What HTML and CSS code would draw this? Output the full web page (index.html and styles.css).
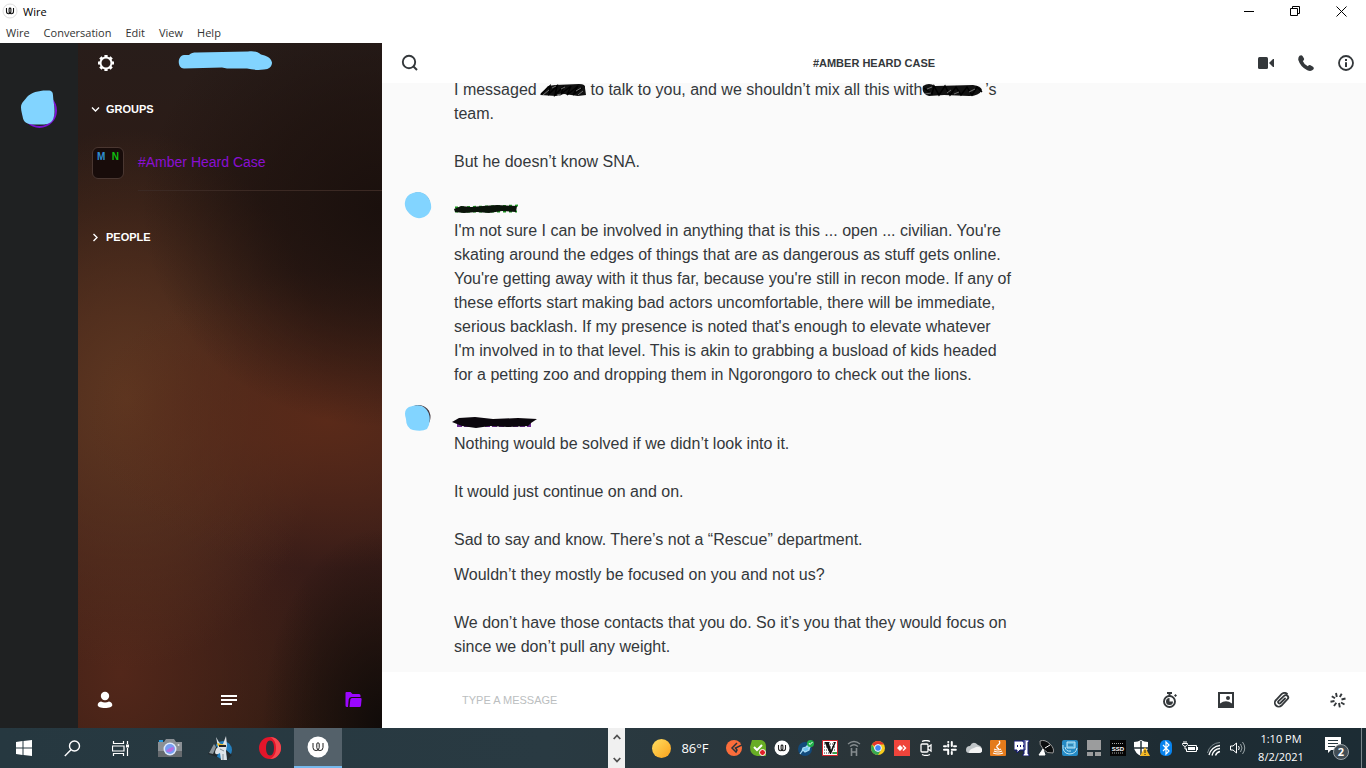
FILE: index.html
```html
<!DOCTYPE html>
<html lang="en">
<head>
<meta charset="utf-8">
<title>Wire</title>
<link rel="stylesheet" href="styles.css">
</head>
<body>
<header class="titlebar">
  <svg class="app-icon" width="16" height="16" viewBox="0 0 16 16"><circle cx="8" cy="8" r="7" fill="#fff" stroke="#ddd"/><path d="M4.500 5v3.500a2.200 2.200 0 0 0 4.400 0V6a.9.9 0 0 0-1.800 0v2.500a2.200 2.200 0 0 0 4.400 0V5" fill="none" stroke="#111" stroke-width="1.100"/></svg>
  <span class="app-name">Wire</span>
  <div class="window-controls">
    <button aria-label="Minimize"><svg width="11" height="11" viewBox="0 0 11 11"><path d="M0 5.500h10" stroke="#000"/></svg></button>
    <button aria-label="Restore"><svg width="11" height="11" viewBox="0 0 11 11" fill="none" stroke="#000"><path d="M.5 2.500h7v7h-7zM2.500 2.500v-2h7v7h-2"/></svg></button>
    <button aria-label="Close"><svg width="11" height="11" viewBox="0 0 11 11"><path d="M.5.5l10 10M10.500.5l-10 10" stroke="#000"/></svg></button>
  </div>
</header>
<nav class="menubar" aria-label="Application menu">
  <button>Wire</button><button>Conversation</button><button>Edit</button><button>View</button><button>Help</button>
</nav>

<div class="app">
  <aside class="rail">
    <button class="account" aria-label="Account">
      <svg width="40" height="42" viewBox="0 0 40 42"><circle cx="20.500" cy="21.500" r="16.500" fill="#1f2122" stroke="#7a12d0" stroke-width="2"/><path d="M8 8C12 3 22 1 29 1.500c4 0 5 2 5 5l.5 6c1.500 8 1.500 13-.5 18-3 5-8 5-12 5-8 0-16 1-18-6-.5-4-2-7-2-11 0-5 3-6 6-10.500z" fill="#82d4ff"/></svg>
    </button>
  </aside>

  <aside class="sidebar">
    <div class="side-head">
      <button aria-label="Settings"><svg width="18" height="18" viewBox="0 0 18 18"><circle cx="9" cy="9" r="5.500" fill="none" stroke="#fff" stroke-width="2"/><path d="M9 1v2.500M9 14.500V17M1 9h2.500M14.500 9H17M3.350 3.350l1.700 1.700M12.950 12.950l1.700 1.700M14.650 3.350l-1.700 1.700M5.050 12.950l-1.700 1.700" stroke="#fff" stroke-width="3.200"/></svg></button>
      <svg class="user-mask" width="96" height="20" viewBox="0 0 96 20"><path d="M7 4h5c2-2 4-2.500 8-2.500l51-1c5-1 9 0 13 3 5 1 10 3 11 8 0 4-3 7-8 7-7 1-12 0-17-1H50l-5-1-38 1C0 17 0 5 7 4z" fill="#82d4ff"/></svg>
    </div>
    <button class="folder"><svg width="9" height="9" viewBox="0 0 9 9"><path d="M1 2.500l3.500 3.500L8 2.500" fill="none" stroke="#fff" stroke-width="1.400"/></svg>GROUPS</button>
    <a class="conversation" href="#">
      <span class="group-avatar"><b class="m">M</b><b class="n">N</b></span>
      <span class="conv-name">#Amber Heard Case</span>
    </a>
    <button class="folder people"><svg width="9" height="9" viewBox="0 0 9 9"><path d="M2.500 1L6 4.500 2.500 8" fill="none" stroke="#fff" stroke-width="1.400"/></svg>PEOPLE</button>
    <nav class="side-foot">
      <button aria-label="Contacts"><svg width="16" height="18" viewBox="0 0 16 18" fill="#fff"><circle cx="8" cy="5" r="4.200"/><path d="M4 10.500c2.500 1.300 5.500 1.300 8 0 2 .5 3.300 1.800 3.300 3.500 0 2-3 3-7.300 3s-7.300-1-7.300-3c0-1.700 1.300-3 3.300-3.500z"/></svg></button>
      <button aria-label="Conversations"><svg width="16" height="18" viewBox="0 0 16 18" stroke="#fff" stroke-width="2"><path d="M0 5h16M0 9h16M0 13h11"/></svg></button>
      <button aria-label="Folders"><svg width="17" height="18" viewBox="0 0 17 18"><path d="M.5 2q0-1 1-1h4l2 2H14q1.500 0 1.500 1.500V6h-9Q4 6 3.700 8.500L3 16H2q-1.500 0-1.500-1.500zM4.500 16l.8-7.500Q5.500 7 7 7h8.500q1.200 0 1.100 1.200l-.6 6.300Q15.800 16 14.500 16z" fill="#9b06ff"/></svg></button>
    </nav>
  </aside>

  <main class="chat">
    <header class="chat-head">
      <button class="find" aria-label="Search"><svg width="18" height="18" viewBox="0 0 18 18" fill="none" stroke="#34383b" stroke-width="1.900"><circle cx="8" cy="8" r="6.200"/><path d="M12.500 12.500L16 16"/></svg></button>
      <h1>#AMBER HEARD CASE</h1>
      <div class="call-actions">
        <button aria-label="Video call"><svg width="16" height="16" viewBox="0 0 16 16" fill="#34383b"><rect y="2" width="10" height="12" rx="1.500"/><path d="M11 8l4-4h1v8h-1z"/></svg></button>
        <button aria-label="Call"><svg width="16" height="16" viewBox="0 0 16 16"><path d="M1.500.8Q3.500-.5 4.700 1.200L6 3.500Q6.500 5 4.800 6 6 9.500 9.800 11.300 11.200 9.500 12.500 10.200l2.500 1.500q1.500 1.200.3 2.700-2.300 2.500-6 .8Q2.500 12 .3 5 0 2.200 1.500.8z" fill="#34383b"/></svg></button>
        <button aria-label="Info"><svg width="16" height="16" viewBox="0 0 16 16"><circle cx="8" cy="8" r="7" fill="none" stroke="#34383b" stroke-width="1.800"/><path d="M7 4h2v2H7zM7 7.200h2V12H7z" fill="#34383b"/></svg></button>
      </div>
    </header>

    <section class="messages">
      <article class="message">
        <div class="body">
          <p>I messaged <svg class="mask mask-a" viewBox="0 0 45 14"><path d="M-1 12L7 3 14 2 38 1q7 0 6 4l1 7-8 1-14-2-8 2z" fill="#111"/><path d="M0 11L9 3l-1 8 8-8-2 9 9-9-3 8 10-8-4 9 11-9-5 9 9-7" fill="none" stroke="#000" stroke-width="1.500"/><path d="M11 5l4-2m5 3l4-2m11 4l5-3M2 12l6-5m8 5l4-1m17 1l5-4" stroke="#999" stroke-width=".7"/></svg> to talk to you, and we shouldn’t mix all this with<svg class="mask mask-b" viewBox="0 0 63 14"><path d="M1 3q6-4 12 0l38-1q8 1 9 5-3 6-13 6l-25-1-15 1Q-1 11 1 3z" fill="#111"/><path d="M2 5l8 6 2-8 5 9 6-9 5 9 6-8 5 8 6-8 5 8 5-8 5 5" fill="none" stroke="#000" stroke-width="1.500"/><path d="M5 6l5-2m15 6l4-3m18 2l6-3M3 11l6-1m23 1l5-2" stroke="#999" stroke-width=".7"/></svg>’s team.<br><br>But he doesn’t know SNA.</p>
        </div>
      </article>
      <article class="message">
        <svg class="avatar" width="28" height="28" viewBox="0 0 28 28"><circle cx="14" cy="13.500" r="12" fill="#333"/><path d="M9 2q8-3 14 3 5 6 4 13-3 8-10 9-7 1-12-5Q0 17 1 11 2 4 9 2z" fill="#82d4ff"/></svg>
        <svg class="name-mask" width="66" height="10" viewBox="0 0 66 10"><path d="M1 3.500l64-2M1 7.500h62" stroke="#1c9a22" stroke-width="2" stroke-dasharray="3 3"/><path d="M0 5l7-3 10 1 12-1 14-1 20 1-1 6-14-1-13 2-12-1-13 1-9-1z" fill="#0a140a"/></svg>
        <div class="body">
          <p>I'm not sure I can be involved in anything that is this ... open ... civilian. You're skating around the edges of things that are as dangerous as stuff gets online. You're getting away with it thus far, because you're still in recon mode. If any of these efforts start making bad actors uncomfortable, there will be immediate, serious backlash. If my presence is noted that's enough to elevate whatever I'm involved in to that level. This is akin to grabbing a busload of kids headed for a petting zoo and dropping them in Ngorongoro to check out the lions.</p>
        </div>
      </article>
      <article class="message">
        <svg class="avatar" width="28" height="28" viewBox="0 0 28 28"><circle cx="14.500" cy="13" r="12" fill="#40333a"/><path d="M5 3q8-3 13-1 6 3 7.500 10 1 8-2.500 13-5 3-14 1-7-2-7-11Q-1 6 5 3z" fill="#82d4ff"/></svg>
        <svg class="name-mask wide" width="86" height="12" viewBox="0 0 86 12"><path d="M5 9h74" stroke="#6c2c91" stroke-width="4" stroke-dasharray="5 2"/><path d="M0 6l7-4 16-1 18 2 25-1 19 1-6 4-3 3-20 1-18-1-14 2-14-2z" fill="#0b070d"/></svg>
        <div class="body">
          <p>Nothing would be solved if we didn’t look into it.<br><br>It would just continue on and on.<br><br>Sad to say and know. There’s not a “Rescue” department.</p>
          <p>Wouldn’t they mostly be focused on you and not us?<br><br>We don’t have those contacts that you do. So it’s you that they would focus on since we don’t pull any weight.</p>
        </div>
      </article>
    </section>

    <form class="composer">
      <input type="text" aria-label="Message" placeholder="TYPE A MESSAGE">
      <button type="button" aria-label="Timed message"><svg width="16" height="16" viewBox="0 0 16 16"><circle cx="7.500" cy="9.500" r="5.500" fill="none" stroke="#34383b" stroke-width="1.900"/><path d="M5 0h5v2H5zM6.500 1h2v3h-2zM12 3.500l1.500-1.500 1.500 1.500L13.500 5zM7.500 6v3.500H11A3.500 3.500 0 1 1 7.500 6z" fill="#34383b"/></svg></button>
      <button type="button" aria-label="Picture"><svg width="16" height="16" viewBox="0 0 16 16"><path d="M0 0h16v16H0zM2 2v9.500Q8 7 14 11.500V2z" fill="#34383b" fill-rule="evenodd"/><circle cx="10" cy="6" r="2" fill="#34383b"/></svg></button>
      <button type="button" aria-label="Attach file"><svg width="16" height="16" viewBox="0 0 16 16"><path d="M11 6.500l-4.500 4.500a1.300 1.300 0 0 1-2-1.900L10 3.800a2.400 2.400 0 0 1 3.500 3.400L7.500 13.500A3.800 3.800 0 0 1 2 8l5.500-5.800a4.500 4.500 0 0 1 5.500-.5" fill="none" stroke="#34383b" stroke-width="1.800" stroke-linecap="round"/></svg></button>
      <button type="button" aria-label="Ping"><svg width="16" height="16" viewBox="0 0 16 16"><path d="M6 1l.8 4M11.700 1.700L9.800 5M15.500 6.500L11.500 7.500M14.500 12.500L11 10.500M9.800 15.300L9 11M4 14l2.300-3.200M.5 9.700l4-.7M1.800 4.200L5 6.300" stroke="#34383b" stroke-width="1.900"/></svg></button>
    </form>
  </main>
</div>

<footer class="taskbar">
  <div class="pinned">
    <button aria-label="Start"><svg width="16" height="16" viewBox="0 0 16 16" fill="#fff"><path d="M0 2l6.500-1v6.500H0zM7.500.9L16 0v7.500H7.500zM0 8.500h6.500V15L0 14zM7.500 8.500H16V16l-8.500-1z"/></svg></button>
    <button aria-label="Search"><svg width="17" height="17" viewBox="0 0 17 17" fill="none" stroke="#fff" stroke-width="1.400"><circle cx="10.500" cy="6" r="5"/><path d="M7 9.800L.8 16"/></svg></button>
    <button aria-label="Task view"><svg width="17" height="17" viewBox="0 0 17 17" fill="none" stroke="#fff" stroke-width="1.200"><path d="M1.500 1v2.500h10V1M1.500 16v-2.500h10V16M.5 6h11.500v5H.5zM15.500 1v3M15.500 8v8"/><path d="M15.500 4.500v3" stroke-width="3"/></svg></button>
    <button class="pin camera" aria-label="Camera"><svg width="24" height="20" viewBox="0 0 24 20"><path d="M1 2h4v3H1z" fill="#279be0"/><path d="M8 1h8l2 3h6v15H0V4h6z" fill="#8b9095"/><path d="M0 13h24v6H0z" fill="#666a6e"/><circle cx="12" cy="11" r="6.500" fill="#dce9fb"/><circle cx="12" cy="11" r="5" fill="#779df3"/><path d="M8 13a5 5 0 0 0 8-4q-4 0-8 4z" fill="#b86dde"/><circle cx="20.500" cy="7" r="1" fill="#ddd"/></svg></button>
    <button class="pin" aria-label="Mule"><svg width="25" height="25" viewBox="0 0 25 25"><circle cx="15" cy="14" r="9" fill="#247fbe"/><path d="M0 18L6 8l5 5-2 8zM17 13l7 6-5 5z" fill="#23292d"/><path d="M1 17l5-9 2 3-3 7z" fill="#8d969b"/><path d="M8 1l4 7h3l3-8 1 9-1 6 1 9h-6l-1-7q-5 3-5-1 0-3 3-5z" fill="#dfe3e8"/><path d="M9 7l9 2v2l-8-1z" fill="#ecb823"/><path d="M11 9h7v2h-7z" fill="#202326"/><path d="M15 18v6M12 13l4 2" stroke="#858d94"/></svg></button>
    <button class="pin" aria-label="Opera"><svg width="24" height="24" viewBox="0 0 24 24"><path d="M12 1a11 11 0 1 0 0 22 11 11 0 0 0 0-22z" fill="#e3152a"/><path d="M12 1a11 11 0 0 1 0 22c8-3 8-19 0-22z" fill="#f5484f"/><path d="M12 4.500c2.700 0 4 3.200 4 7.500s-1.300 7.500-4 7.500S8 16.300 8 12s1.300-7.500 4-7.500z" fill="#26363e"/></svg></button>
    <button class="running" aria-label="Wire"><svg width="22" height="22" viewBox="0 0 22 22"><circle cx="11" cy="11" r="10.500" fill="#fff"/><path d="M6 7v4.500a3.100 3.100 0 0 0 6.200 0V8a1.200 1.200 0 0 0-2.400 0v3.500a3.100 3.100 0 0 0 6.200 0V7" fill="none" stroke="#222" stroke-width="1"/></svg></button>
  </div>
  <div class="scroller">
    <button aria-label="Scroll up"><svg width="8" height="6" viewBox="0 0 8 6"><path d="M.7 5L4 1.500 7.300 5" fill="none" stroke="#505050" stroke-width="1.800"/></svg></button>
    <button aria-label="Scroll down"><svg width="8" height="6" viewBox="0 0 8 6"><path d="M.7 1L4 4.500 7.300 1" fill="none" stroke="#505050" stroke-width="1.800"/></svg></button>
  </div>
  <button class="weather"><span class="sun"></span>86°F</button>
  <div class="tray">
    <svg viewBox="0 0 16 16"><circle cx="8" cy="8" r="8" fill="#fb6d3b"/><path d="M11 3L6 8l4 4 1-2-1.500-2L16 5" fill="none" stroke="#28343a" stroke-width="1.500"/></svg>
    <svg viewBox="0 0 16 16"><path d="M2 0h9q5 1 5 7v9H7Q0 15 0 7z" fill="#68ad25"/><path d="M4 7l3 3 5-5" fill="none" stroke="#fff" stroke-width="2"/><circle cx="12.500" cy="12.500" r="3" fill="#e21f26" stroke="#fff"/></svg>
    <svg viewBox="0 0 16 16"><circle cx="8" cy="8" r="7.500" fill="#fff"/><path d="M4.500 5v3.500a2.200 2.200 0 0 0 4.400 0V6a.9.9 0 0 0-1.800 0v2.500a2.200 2.200 0 0 0 4.400 0V5" fill="none" stroke="#222" stroke-width="1.100"/></svg>
    <svg viewBox="0 0 16 16"><circle cx="7" cy="9" r="7" fill="#124a7b"/><path d="M2 14l3-4 2 2 4-2 1-4-4 1-3 1-1 3zM8 7l3-3M10 9l3-3" stroke="#a9dcf7" stroke-width="1.200" fill="#70c4ef"/><circle cx="12.500" cy="3.500" r="3.500" fill="#20b24b"/><path d="M11 3l1 1.500L14.500 2" stroke="#fff" fill="none"/></svg>
    <svg viewBox="0 0 16 16"><path d="M.5.500h15v15H.5z" fill="#fff" stroke="#d5232c"/><path d="M2 4h12M2 7h12M2 10h12M2 13h12" stroke="#333" stroke-width="1" stroke-dasharray="1 1"/><path d="M2 2h6l-1 1 2 7 3-7-1-1h3L9 14H8L3 3z" fill="#111"/><path d="M11 12h4v2h-4z" fill="#35a54c"/></svg>
    <svg viewBox="0 0 16 16" fill="none" stroke="#858c8f"><path d="M5.500 8v8M10.500 8v8M5.500 12h5" stroke-width="1.600"/><path d="M2 4q6-5 12 0M4 6.500q4-3.500 8 0" stroke-width="1.300"/></svg>
    <svg viewBox="0 0 16 16"><circle cx="8" cy="8" r="7" fill="#f8cc1d"/><path d="M8 8L2 4.500A7 7 0 0 1 14 4.500H8z" fill="#e5372c"/><path d="M2 4.500A7 7 0 0 0 8 15l3-5H5z" fill="#36a852"/><circle cx="8" cy="8" r="3.400" fill="#4285f4" stroke="#fff"/></svg>
    <svg viewBox="0 0 16 16"><path d="M0 0h16v16H0z" fill="#ef443b"/><path d="M3 8l3-3 3 3-3 3zM8.500 6l1-1 3 3-3 3-1-1 2-2z" fill="#fff"/></svg>
    <svg viewBox="0 0 16 16" fill="none" stroke="#fff" stroke-width="1.300"><rect x="3" y="4" width="7" height="8" rx="1"/><path d="M10 7l3-2v6l-3-2M4 1.500q4-2 8 0M4 14.500q4 2 8 0"/></svg>
    <svg viewBox="0 0 16 16" stroke="#fff" stroke-width="2" stroke-linecap="round"><path d="M6.200 4.500v2M6.200 2h.1M2 6.200h2M9.800 2v4M12 6.200h2M9.800 9.800h4M9.800 12v2M6.200 10v4M2 9.800h4"/></svg>
    <svg viewBox="0 0 16 16"><path d="M0 10q0-4 4-4 3-6 8-1 4 1 4 5 0 3-3 3H3q-3 0-3-3z" fill="#c0c5c8"/><path d="M3 13q0-4 5-5 5-3 8 1 1 4-3 4z" fill="#f3f3f3"/></svg>
    <svg viewBox="0 0 16 16"><rect width="16" height="16" rx="1" fill="#e47b1c"/><path d="M9 1q2 2-1 4t1 4M4 9q4 2 7 0M4 11q4 2 8 0M3 13q5 2 10 0" fill="none" stroke="#fff" stroke-width="1.200"/></svg>
    <svg viewBox="0 0 16 16"><path d="M0 1h11v9H6l-3 3v-3H0zM9 0h6v2h-1v12h1v2H9v-2h1V2H9z" fill="#fff" stroke="#151979"/><path d="M3 6h1M6 6h1M9 6h1" stroke="#151979" stroke-width="2"/></svg>
    <svg viewBox="0 0 16 16"><path d="M2 1Q7-1 12 4t3 9Q9 14 5 9T2 1z" fill="#0c0e0f" stroke="#999"/><path d="M5 9L1 15h6zM7 8l5-3" fill="#fff" stroke="#fff"/></svg>
    <svg viewBox="0 0 16 16"><rect width="16" height="16" rx="2" fill="#258ac4"/><path d="M5 2h8v6H5z" fill="#58b5df" stroke="#c2e5f6"/><path d="M1 5q-1 8 6 9 7 0 8-6M3 7q1 5 6 4" fill="none" stroke="#bce5f6"/><path d="M6 5h5" stroke="#155a91"/></svg>
    <svg viewBox="0 0 16 16"><path d="M1 0h14v10H1zM1 12h6v4H1zM9 12h6v4H9z" fill="#9b9c9d"/></svg>
    <svg viewBox="0 0 16 16"><path d="M0 0h16v16H0z" fill="#050505"/><path d="M2 3.500h12M2 13h12" stroke="#aaa" stroke-dasharray="1 1"/><text x="8" y="11" text-anchor="middle" class="ssd">SSD</text></svg>
    <svg viewBox="0 0 16 16"><path d="M7 0q3 2 7 2v6q-1 5-7 8Q1 13 0 8V2q4 0 7-2z" fill="#fff"/><path d="M7 1v14M0 8h14" stroke="#263339" stroke-width="1.500"/><path d="M11 7l5 9H6z" fill="#f5b924"/><path d="M11 10v3M11 14v1" stroke="#222"/></svg>
    <svg viewBox="0 0 16 16"><rect x="2" width="12" height="16" rx="5" fill="#0883ee"/><path d="M5 5l6 6-3 3V2l3 3-6 6" fill="none" stroke="#fff" stroke-width="1.200"/></svg>
    <svg viewBox="0 0 16 16" fill="none" stroke="#fff" stroke-width="1"><path d="M6 5.500h8.500v6h-10V9M15.500 7v3M.5 3.500h5v1q-2.500 4-5 0zM2 3V1M4 3V1M3 7v2h2"/><path d="M6 8.500h7" stroke-width="3"/></svg>
    <svg viewBox="0 0 16 16" fill="none" stroke="#fff"><path d="M1.500 13A13 13 0 0 1 14 2.500" stroke="#7c888d"/><path d="M3 15A12 12 0 0 1 14 5.500M6 15.500A9 9 0 0 1 14 8.500M9.500 15.500a6 6 0 0 1 4.500-4" stroke-width="1.300"/></svg>
    <svg viewBox="0 0 16 16" fill="none" stroke="#fff"><path d="M.5 6v4H3l3.500 3V3L3 6zM8.500 6q1.500 2 0 4"/><path d="M10.500 4q3 4 0 8M12.500 2q4.500 6 0 12" stroke="#9ba5a8"/></svg>
  </div>
  <time class="clock"><span>1:10 PM</span><span>8/2/2021</span></time>
  <button class="notify" aria-label="Notifications"><svg width="26" height="24" viewBox="0 0 26 24"><path d="M1 1h16v13H7l-3 3v-3H1z" fill="#fff"/><path d="M4 4.500h10M4 7.500h10M4 10.500h7" stroke="#263940"/><circle cx="17" cy="16" r="7.500" fill="#414d54" stroke="#9ba4a8"/><text x="17" y="20" text-anchor="middle" class="badge">2</text></svg></button>
</footer>
</body>
</html>
```
FILE: styles.css
```css
* { box-sizing: border-box; }
body {
  margin: 0;
  height: 100vh;
  display: flex;
  flex-direction: column;
  overflow: hidden;
  background: #fff;
  color: #34383b;
  font-family: "Liberation Sans", Arial, sans-serif;
}
button {
  border: 0;
  padding: 0;
  background: none;
  color: inherit;
  font: inherit;
  display: flex;
  align-items: center;
  justify-content: center;
}
svg { flex: none; display: block; }

.titlebar, .menubar, .taskbar { font-family: "Open Sans", "Noto Sans", sans-serif; font-size: 11px; flex: none; }
.titlebar { height: 22px; display: flex; align-items: center; padding: 0 2px; color: #000; }
.app-name { margin-left: 5px; }
.window-controls { margin-left: auto; display: flex; }
.window-controls button { width: 46px; height: 22px; }
.menubar { height: 21px; display: flex; align-items: center; gap: 14px; padding: 0 6px; color: #333; }

.app { flex: 1; min-height: 0; display: flex; }
.rail { width: 78px; flex: none; background: #1f2122; display: flex; flex-direction: column; align-items: center; padding-top: 46px; }
.sidebar {
  width: 304px;
  flex: none;
  display: flex;
  flex-direction: column;
  color: #fff;
  background:
    radial-gradient(ellipse 120px 200px at 100% 100%, #100b09 0, #100b0980 50%, #100b0900 100%),
    radial-gradient(ellipse 240px 220px at 100% 24%, #1a100d 0, #1a100d90 50%, #1a100d00 100%),
    radial-gradient(ellipse 240px 150px at 82% 55%, #5a2a19 0, #5a2a1980 50%, #5a2a1900 100%),
    radial-gradient(ellipse 200px 270px at 16% 52%, #5e3721 0, #5e372180 50%, #5e372100 100%),
    radial-gradient(ellipse 200px 260px at 14% 92%, #52271a 0, #52271a80 50%, #52271a00 100%),
    linear-gradient(#281d1a 0, #2d1b15 24%, #3b2018 40%, #42221a 58%, #381c18 76%, #301b12 100%);
}
.side-head { height: 41px; display: flex; align-items: center; padding: 0 0 1px 19px; gap: 62px; }
.user-mask { margin-bottom: 4px; }
.folder { height: 50px; padding-left: 13px; gap: 6px; font-size: 11px; font-weight: 700; justify-content: flex-start; }
.conversation { display: flex; align-items: center; height: 57px; padding-left: 14px; gap: 14px; color: #8a0fd2; text-decoration: none; font-size: 14px; }
.group-avatar { width: 32px; height: 32px; border: 1px solid #4a3731; border-radius: 6px; background: #180c0a; display: flex; justify-content: space-between; padding: 4px; font-size: 10px; line-height: 10px; }
.group-avatar .m { color: #2f8fd0; }
.group-avatar .n { color: #10bf10; }
.conv-name { flex: 1; align-self: stretch; display: flex; align-items: center; border-bottom: 1px solid #3b2923; }
.people { margin-top: 21px; }
.side-foot { margin-top: auto; height: 56px; display: flex; align-items: center; justify-content: space-between; padding: 0 20px 0 19px; }

.chat { flex: 1; min-width: 0; display: flex; flex-direction: column; }
.chat-head { height: 40px; flex: none; display: grid; grid-template-columns: 1fr auto 1fr; align-items: center; padding: 0 12px; }
.find { justify-self: start; margin-left: 7px; }
.chat-head h1 { margin: 0; font-size: 11px; font-weight: 700; }
.call-actions { justify-self: end; display: flex; gap: 24px; }
.messages { flex: 1; min-height: 0; overflow: hidden; background: #fafafa; display: flex; flex-direction: column; justify-content: flex-end; gap: 21px; padding-bottom: 13px; }
.message { flex: none; display: grid; grid-template-columns: 72px minmax(0, 560px); font-size: 16px; line-height: 24px; }
.body { grid-column: 2; display: flex; flex-direction: column; gap: 11px; }
.body p { margin: 0; }
.avatar { justify-self: center; align-self: end; margin: -4px 0 0; }
.name-mask { align-self: center; margin-top: 4px; }
.name-mask.wide { margin-left: -2px; }
.mask { display: inline-block; height: 14px; vertical-align: -2px; overflow: visible; }
.mask-a { width: 45px; }
.mask-b { width: 63px; }
.composer { flex: none; height: 56px; display: flex; align-items: center; gap: 40px; padding: 0 20px 0 80px; }
.composer input { flex: 1; min-width: 0; border: 0; outline: 0; padding: 0; background: none; font: 11px "Liberation Sans", Arial, sans-serif; color: #34383b; }
.composer input::placeholder { color: #bbbec0; opacity: 1; }

.taskbar { height: 40px; display: flex; align-items: stretch; color: #fff; background: linear-gradient(90deg, #263840 0, #293a42 40%, #2a3438 65%, #1e2c33 85%, #1c2c34 100%); }
.pinned { display: flex; flex: 1; }
.pinned button { width: 48px; }
.pinned .pin { width: 49px; }
.pinned .camera { width: 52px; }
.pinned .running { background: #54616a; border-bottom: 2px solid #76b9ed; }
.scroller { width: 17px; background: #f0f0f0; display: flex; flex-direction: column; justify-content: space-between; align-items: center; padding: 6px 0 5px; }
.weather { width: 101px; padding-left: 10px; gap: 10px; font-size: 13px; }
.sun { width: 19px; height: 19px; border-radius: 50%; background: linear-gradient(135deg, #ffdf62, #fba11b); }
.tray { display: flex; align-items: center; gap: 8px; }
.tray svg { width: 16px; height: 16px; }
.ssd { font: 700 6px "Liberation Sans", sans-serif; fill: #fff; }
.clock { width: 70px; display: flex; flex-direction: column; justify-content: center; align-items: center; line-height: 18px; }
.notify { width: 46px; margin-right: 4px; padding-right: 3px; border-right: 1px solid #7a868b; }
.badge { font: 700 11px "Open Sans", sans-serif; fill: #fff; }
```
